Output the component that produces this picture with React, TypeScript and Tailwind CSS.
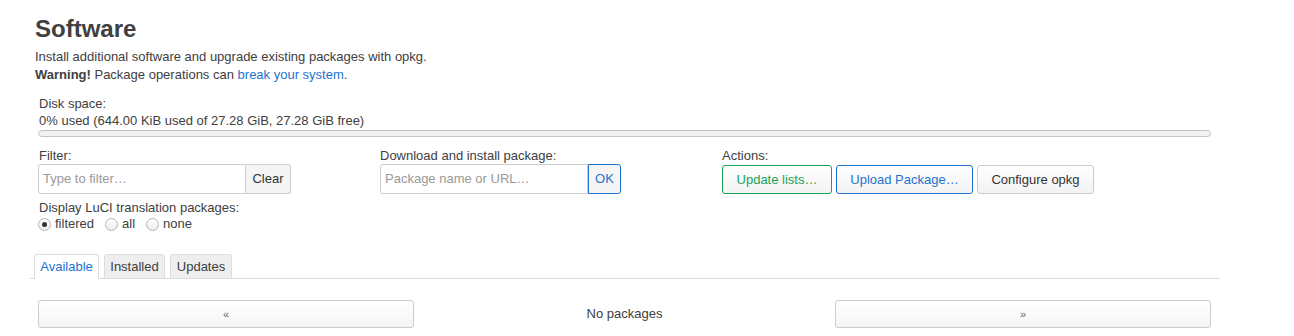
import { JSX } from 'react'

function Radio({ checked, label }: { checked?: boolean; label: string }): JSX.Element {
  return (
    <label className="flex items-center gap-[4px] mr-[11px]">
      <span className="w-[13px] h-[13px] rounded-full border border-[#b5b5b5] bg-gradient-to-b from-white to-[#ededed] flex items-center justify-center">
        {checked && <span className="w-[5px] h-[5px] rounded-full bg-[#333]" />}
      </span>
      <span>{label}</span>
    </label>
  )
}

export default function App(): JSX.Element {
  return (
    <div className="w-[1294px] h-[336px] overflow-hidden bg-white text-[#404040] text-[13px] leading-[18px] font-['Liberation_Sans',Arial,sans-serif]">
      <div className="pl-[35px] pt-[14px]">
        <h2 className="text-[24px] leading-[30px] font-bold text-[#404040]">Software</h2>
        <div className="mt-[4px]">Install additional software and upgrade existing packages with opkg.</div>
        <div>
          <strong>Warning!</strong> Package operations can{' '}
          <a className="text-[#1e73cf]">break your system</a>.
        </div>
      </div>

      <div className="ml-[38px] w-[1173px] mt-[11px]">
        <div className="pl-[1px]">Disk space:</div>
        <div className="pl-[1px] -mt-[1px]">0% used (644.00 KiB used of 27.28 GiB, 27.28 GiB free)</div>
        <div className="h-[7px] rounded-[4px] border border-[#c4c4c4] bg-[#f2f2f2]" />
      </div>

      <div className="ml-[38px] mt-[10px] flex">
        <div className="w-[342px]">
          <div className="pl-[1px] h-[17px]">Filter:</div>
          <div className="flex h-[30px] w-[253px]">
            <div className="flex-1 border border-[#ccc] rounded-l-[3px] flex items-center pl-[4px] text-[#999]">
              Type to filter…
            </div>
            <div className="w-[45px] border border-l-0 border-[#ccc] rounded-r-[3px] bg-[#f5f5f5] flex items-center justify-center text-[#333]">
              Clear
            </div>
          </div>
          <div className="mt-[5px] pl-[1px]">Display LuCI translation packages:</div>
          <div className="flex items-center -mt-[2px]">
            <Radio checked label="filtered" />
            <Radio label="all" />
            <Radio label="none" />
          </div>
        </div>
        <div className="w-[342px]">
          <div className="h-[17px]">Download and install package:</div>
          <div className="flex h-[30px] w-[241px]">
            <div className="flex-1 border border-[#ccc] rounded-l-[3px] flex items-center pl-[4px] text-[#999]">
              Package name or URL…
            </div>
            <div className="w-[33px] border border-[#1e73cf] rounded-r-[3px] bg-[#f5f5f5] flex items-center justify-center text-[#1e73cf]">
              OK
            </div>
          </div>
        </div>
        <div>
          <div className="h-[18px]">Actions:</div>
          <div className="flex gap-[4px] h-[29px]">
            <div className="w-[110px] border border-[#18a558] rounded-[3px] bg-gradient-to-b from-white to-[#f3f3f3] flex items-center justify-center text-[#18a558]">
              Update lists…
            </div>
            <div className="w-[137px] border border-[#1e73cf] rounded-[3px] bg-gradient-to-b from-white to-[#f3f3f3] flex items-center justify-center text-[#1e73cf]">
              Upload Package…
            </div>
            <div className="w-[117px] border border-[#ccc] rounded-[3px] bg-gradient-to-b from-white to-[#f3f3f3] flex items-center justify-center text-[#333]">
              Configure opkg
            </div>
          </div>
        </div>
      </div>

      <div className="ml-[30px] w-[1190px] mt-[21px] flex items-end gap-[5px] pl-[4px] border-b border-[#ddd] h-[25px]">
        <div className="w-[65px] h-[25px] -mb-px flex items-center justify-center border border-b-0 border-[#ddd] rounded-t-[3px] bg-white text-[#1e73cf]">
          Available
        </div>
        <div className="w-[61px] h-[24px] flex items-center justify-center border border-b-0 border-[#ddd] rounded-t-[3px] bg-[#eee] text-[#404040]">
          Installed
        </div>
        <div className="w-[62px] h-[24px] flex items-center justify-center border border-b-0 border-[#ddd] rounded-t-[3px] bg-[#eee] text-[#404040]">
          Updates
        </div>
      </div>

      <div className="ml-[38px] w-[1173px] mt-[21px] flex items-center">
        <div className="w-[376px] h-[28px] border border-[#ccc] rounded-[3px] bg-gradient-to-b from-white to-[#f5f5f5] flex items-center justify-center text-[#666] text-[11px]">
          «
        </div>
        <div className="flex-1 text-center">No packages</div>
        <div className="w-[376px] h-[28px] border border-[#ccc] rounded-[3px] bg-gradient-to-b from-white to-[#f5f5f5] flex items-center justify-center text-[#666] text-[11px]">
          »
        </div>
      </div>
    </div>
  )
}
